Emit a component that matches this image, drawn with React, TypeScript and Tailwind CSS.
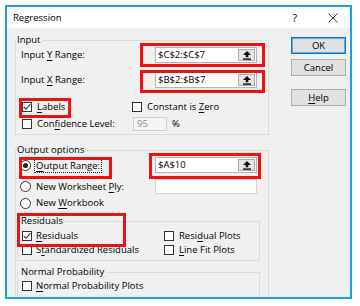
import React from 'react'

// underlined access key
function U({ children }: { children: React.ReactNode }) {
  return <span className="underline decoration-1 underline-offset-[1.5px]">{children}</span>
}

function Check({ checked }: { checked?: boolean }) {
  return (
    <span className="w-[10px] h-[10px] border border-[#333] bg-white flex items-center justify-center shrink-0">
      {checked && (
        <svg width="8" height="8" viewBox="0 0 8 8">
          <polyline points="0.8,4 3,6.3 7.3,1.2" fill="none" stroke="#333" strokeWidth="1.1" />
        </svg>
      )}
    </span>
  )
}

function Radio({ on }: { on?: boolean }) {
  return (
    <span className="w-[11px] h-[11px] rounded-full border border-[#333] bg-white flex items-center justify-center shrink-0">
      {on && <span className="w-[5px] h-[5px] rounded-full bg-[#222]" />}
    </span>
  )
}

function UpIcon() {
  return (
    <svg width="8" height="9" viewBox="0 0 8 9">
      <polygon points="4,0 8,4 5.3,4 5.3,6.3 2.7,6.3 2.7,4 0,4" fill="#111" />
      <rect x="0" y="7.4" width="8" height="1.4" fill="#111" />
    </svg>
  )
}

function RangeField({ value, h = 'h-[16px]' }: { value: string; h?: string }) {
  return (
    <div className={`w-[102px] ${h} bg-white border border-[#b4b4b4] flex items-center`}>
      <span className="flex-1 pl-[2px] leading-none">{value}</span>
      <span className="w-[17px] h-[12px] mr-[1px] bg-[#e5e5e5] border border-[#adadad] flex items-center justify-center">
        <UpIcon />
      </span>
    </div>
  )
}

export default function App() {
  return (
    <div className="relative w-[360px] h-[306px] bg-white pl-[5px] pt-[5px] text-[9.5px] leading-[14px] text-[#000] font-['Open_Sans',sans-serif]">
      <div className="w-[347px] h-[294px] border-2 border-[#1ba1e2] bg-[#f0f0f0] flex flex-col overflow-hidden">
        {/* title bar */}
        <div className="h-[21px] shrink-0 bg-white flex items-center">
          <span className="pl-[6px]">Regression</span>
          <span className="ml-auto text-[10.5px]">?</span>
          <svg className="ml-[31px] mr-[12px]" width="10" height="10" viewBox="0 0 10 10">
            <path d="M0.5 0.5 L9.5 9.5 M9.5 0.5 L0.5 9.5" stroke="#222" strokeWidth="0.9" />
          </svg>
        </div>

        <div className="flex pl-[8px]">
          <div className="w-[254px] flex flex-col">
            {/* Input */}
            <fieldset className="mt-[5px] w-[254px] border border-[#dcdcdc]">
              <legend className="px-[1px] leading-[14px]">Input</legend>
              <div className="px-[5px] pb-[3px]">
                <div className="flex items-center h-[16px]">
                  <span className="w-[134px]">Input <U>Y</U> Range:</span>
                  <RangeField value="$C$2:$C$7" />
                </div>
                <div className="flex items-center h-[16px] mt-[9px]">
                  <span className="w-[134px]">Input <U>X</U> Range:</span>
                  <RangeField value="$B$2:$B$7" />
                </div>
                <div className="flex items-center h-[14px] mt-[12px]">
                  <div className="w-[111px] flex items-center gap-[5px] pl-[1px]">
                    <Check checked />
                    <span><U>L</U>abels</span>
                  </div>
                  <div className="flex items-center gap-[5px]">
                    <Check />
                    <span>Constant is <U>Z</U>ero</span>
                  </div>
                </div>
                <div className="flex items-center h-[14px] mt-[3px]">
                  <div className="w-[111px] flex items-center gap-[5px] pl-[1px]">
                    <Check />
                    <span>Con<U>f</U>idence Level:</span>
                  </div>
                  <div className="ml-[1px] w-[34px] h-[14px] border border-[#cfcfcf] bg-[#f4f4f4] text-[#8c8c8c] pl-[3px] flex items-center">
                    95
                  </div>
                  <span className="ml-[5px]">%</span>
                </div>
              </div>
            </fieldset>

            {/* Output options */}
            <fieldset className="mt-[8px] w-[254px] border border-[#dcdcdc] pb-[30px]">
              <legend className="px-[1px] leading-[14px]">Output options</legend>
              <div className="pl-[4px]">
                <div className="flex items-center h-[16px]">
                  <div className="w-[135px] flex items-center gap-[3px]">
                    <Radio on />
                    <span className="border border-dotted border-[#222] px-[1px] leading-[13px]">
                      <U>O</U>utput Range:
                    </span>
                  </div>
                  <RangeField value="$A$10" />
                </div>
                <div className="flex items-center h-[15px] mt-[6px]">
                  <div className="w-[135px] flex items-center gap-[5px]">
                    <Radio />
                    <span>New Worksheet <U>P</U>ly:</span>
                  </div>
                  <div className="w-[102px] h-[15px] bg-white border border-[#d4d4d4]" />
                </div>
                <div className="flex items-center h-[14px] mt-[2px]">
                  <div className="flex items-center gap-[5px]">
                    <Radio />
                    <span>New <U>W</U>orkbook</span>
                  </div>
                </div>
              </div>

              {/* Residuals */}
              <fieldset className="mt-[4px] ml-[1px] w-[243px] border border-[#dcdcdc] pl-[1px]">
                <legend className="px-[2px] leading-[14px]">Residuals</legend>
                <div className="pl-[3px] pb-[3px]">
                  <div className="flex items-center h-[14px] mt-[1px]">
                    <div className="w-[142px] flex items-center gap-[4px]">
                      <Check checked />
                      <span><U>R</U>esiduals</span>
                    </div>
                    <div className="flex items-center gap-[5px]">
                      <Check />
                      <span>Resi<U>d</U>ual Plots</span>
                    </div>
                  </div>
                  <div className="flex items-center h-[14px]">
                    <div className="w-[142px] flex items-center gap-[4px]">
                      <Check />
                      <span>S<U>t</U>andardized Residuals</span>
                    </div>
                    <div className="flex items-center gap-[5px]">
                      <Check />
                      <span><U>L</U>ine Fit Plots</span>
                    </div>
                  </div>
                </div>
              </fieldset>

              {/* Normal Probability */}
              <fieldset className="mt-[4px] ml-[1px] w-[243px] border border-[#dcdcdc] pl-[1px]">
                <legend className="px-[2px] leading-[14px]">Normal Probability</legend>
                <div className="pl-[3px] pb-[20px]">
                  <div className="flex items-center h-[14px]">
                    <div className="flex items-center gap-[4px]">
                      <Check />
                      <span><U>N</U>ormal Probability Plots</span>
                    </div>
                  </div>
                </div>
              </fieldset>
            </fieldset>
          </div>

          {/* buttons */}
          <div className="ml-[22px] w-[55px] flex flex-col">
            <button className="mt-[9px] h-[17px] bg-[#e1e1e1] border border-[#0078d7] shadow-[inset_0_0_0_1px_#6aa9df] leading-none">
              OK
            </button>
            <button className="mt-[5px] h-[17px] bg-[#e1e1e1] border border-[#adadad] leading-none">
              Cancel
            </button>
            <button className="mt-[13px] h-[17px] bg-[#e1e1e1] border border-[#adadad] leading-none">
              <U>H</U>elp
            </button>
          </div>
        </div>
      </div>

      {/* red annotation boxes */}
      <div className="absolute left-[140px] top-[43px] w-[125px] h-[24px] border-[3px] border-[#ee1111]" />
      <div className="absolute left-[140px] top-[70px] w-[125px] h-[23px] border-[3px] border-[#ee1111]" />
      <div className="absolute left-[19px] top-[98px] w-[52px] h-[20px] border-[3px] border-[#ee1111]" />
      <div className="absolute left-[19px] top-[157px] w-[93px] h-[22px] border-[3px] border-[#ee1111]" />
      <div className="absolute left-[149px] top-[153px] w-[112px] h-[26px] border-[3px] border-[#ee1111]" />
      <div className="absolute left-[17px] top-[213px] w-[109px] h-[34px] border-[3px] border-[#ee1111]" />
    </div>
  )
}
